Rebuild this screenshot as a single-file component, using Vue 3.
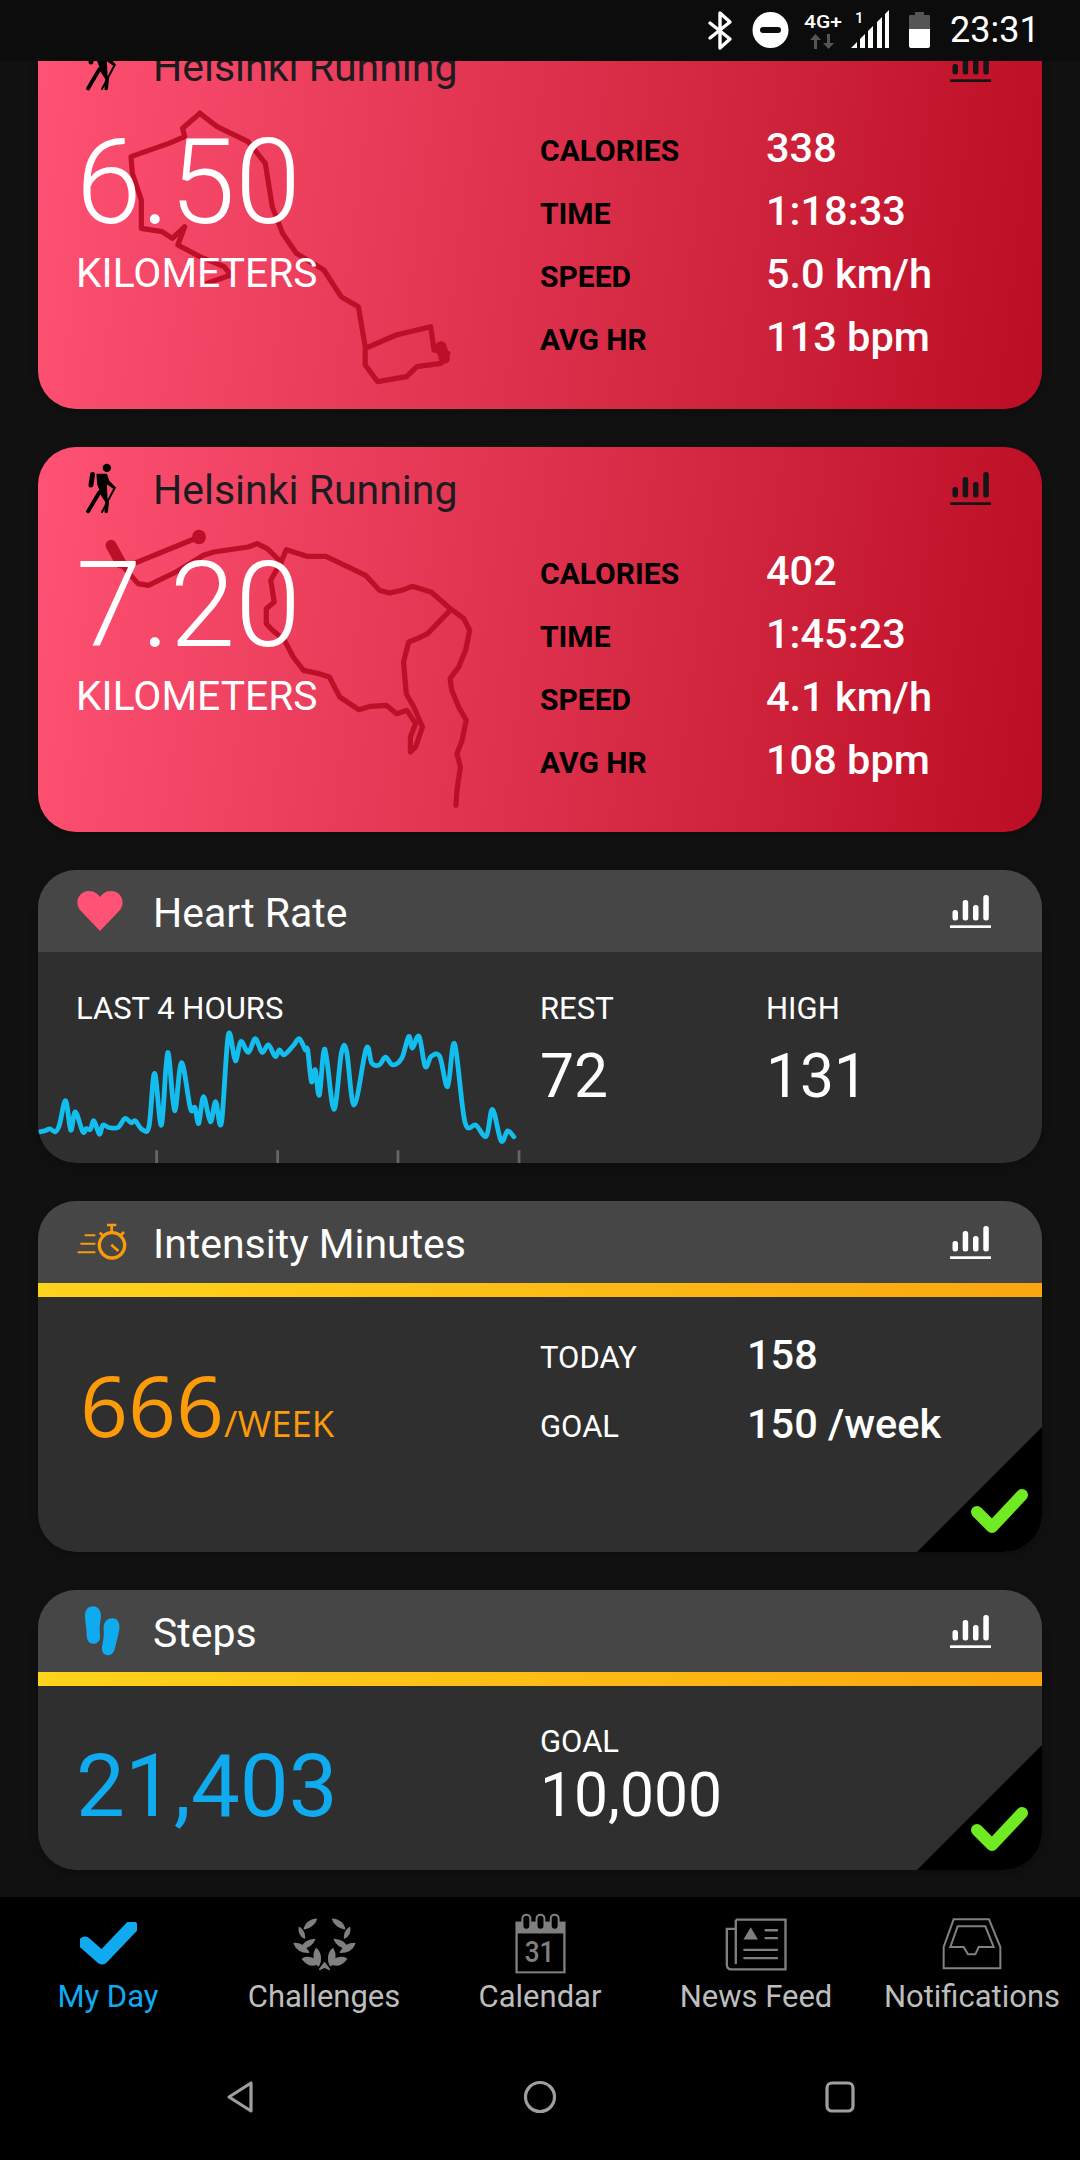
<script setup>
// heart rate trace, read off the reference
const hrPoints = [
  [115,815],[130,812],[145,806],[160,815],[172,795],[190,722],[205,810],[218,755],[240,815],[250,805],
  [262,808],[272,782],[288,822],[298,795],[315,802],[342,802],[362,775],[380,788],[392,782],[412,808],
  [432,798],[448,640],[468,795],[486,578],[506,752],[526,608],[552,745],[565,742],[576,790],[590,710],
  [610,785],[625,725],[642,788],[662,525],[682,603],[698,545],[720,578],[740,537],[760,578],[778,555],
  [798,590],[810,570],[824,585],[850,558],[868,537],[885,570],[892,570],[903,665],[914,630],[926,705],
  [942,568],[968,748],[990,578],[1005,575],[1027,735],[1062,566],[1078,610],[1100,615],[1118,592],[1138,615],
  [1165,595],[1185,530],[1196,565],[1215,530],[1233,620],[1250,590],[1275,590],[1298,680],[1318,552],[1348,785],
  [1380,795],[1410,828],[1428,748],[1453,842],[1472,812],[1490,830]
]

function smooth(pts) {
  let d = `M${pts[0][0]} ${pts[0][1]}`
  for (let i = 0; i < pts.length - 1; i++) {
    const p0 = pts[i - 1] || pts[i]
    const p1 = pts[i]
    const p2 = pts[i + 1]
    const p3 = pts[i + 2] || p2
    const c1x = p1[0] + (p2[0] - p0[0]) / 6
    const c1y = p1[1] + (p2[1] - p0[1]) / 6
    const c2x = p2[0] - (p3[0] - p1[0]) / 6
    const c2y = p2[1] - (p3[1] - p1[1]) / 6
    d += ` C${c1x} ${c1y} ${c2x} ${c2y} ${p2[0]} ${p2[1]}`
  }
  return d
}

const hrPath = smooth(hrPoints)
const ticks = [454, 805, 1154, 1505]

const activities = [
  {
    km: '6.50',
    viewBox: '55 72 871 1155',
    route: [
      'M290 340 L265 385 L268 410 L245 430 L190 470 L192 520 L205 600 L205 685 L235 695 L250 715 L268 680 L258 735 L290 770 L325 800 L335 825 L300 850',
      'M290 340 L315 380 L360 425 L385 490 L395 620 L410 700 L430 760 L470 810 L495 890 L520 920 L530 1040 L530 1095 L548 1145 L590 1130 L605 1100 L640 1090 L650 1060 L630 1050 L625 980 L575 1005 L530 1045'
    ],
    thick: 'M640 1040 L645 1075',
    dots: [],
    rows: [
      ['CALORIES', '338'],
      ['TIME', '1:18:33'],
      ['SPEED', '5.0 km/h'],
      ['AVG HR', '113 bpm']
    ]
  },
  {
    km: '7.20',
    viewBox: '110 50 1740 1155',
    route: [
      'M577 320 L375 405',
      'M350 400 L400 460 L430 465 L510 425 L590 375 L620 365 L720 350 L745 340 L775 355 L815 395 L830 358 L890 378 L945 378 L1000 405 L1060 435 L1100 480 L1130 488 L1165 480 L1195 468 L1250 485 L1300 530 L1345 565 L1362 600 L1350 660 L1330 710 L1305 745 L1310 780 L1330 830 L1352 870 L1340 930 L1325 970 L1335 1010 L1325 1080 L1322 1125',
      'M1305 540 L1240 610 L1210 625 L1185 635 L1170 695 L1178 790 L1200 830 L1225 890 L1205 950 L1190 965 L1190 920 L1205 880 L1180 840 L1150 850 L1120 825 L1075 828 L1040 838 L985 800 L955 740 L925 730 L880 720 L850 680 L825 630 L790 600 L772 580 L772 535 L795 515 L785 450 L815 395'
    ],
    thick: 'M322 345 L350 398',
    dots: [[577, 320, 20, 22]],
    rows: [
      ['CALORIES', '402'],
      ['TIME', '1:45:23'],
      ['SPEED', '4.1 km/h'],
      ['AVG HR', '108 bpm']
    ]
  }
]

const navItems = [
  { label: 'My Day', icon: 'check', active: true },
  { label: 'Challenges', icon: 'laurel' },
  { label: 'Calendar', icon: 'calendar' },
  { label: 'News Feed', icon: 'news' },
  { label: 'Notifications', icon: 'inbox' }
]
</script>

<template>
  <div class="page">
    <header class="status">
      <svg class="status-icons" viewBox="700 0 240 61" width="240" height="61">
        <path d="M710 23 L730 39 L720 48 V13 L730 22 L710 38" fill="none" stroke="#fff" stroke-width="3.4" stroke-linejoin="round" stroke-linecap="round" />
        <circle cx="770.5" cy="30" r="18" fill="#fff" />
        <rect x="760" y="27" width="21" height="6" rx="3" fill="#0c0c0c" />
        <text x="804" y="28" class="net" textLength="38" lengthAdjust="spacingAndGlyphs">4G+</text>
        <path d="M815 50 V41 H811 L816.500 35 L822 41 H818 V50Z M831 35 V44 H835 L829.500 50 L824 44 H828 V35Z" fill="#555" transform="translate(-1 -1)" />
        <text x="855" y="23" class="net-one">1</text>
        <path d="M851 48 L857 42 V48Z M860 48 V39 L865 34 V48Z M868 48 V31 L873 26 V48Z M877 48 V22 L882 17 V48Z M885 48 V14 L889 10 V48Z" fill="#fff" />
        <path d="M909 16 Q909 15 910 15 H915 V12 H924 V15 H929 Q930 15 930 16 V29 H909Z" fill="#555" />
        <path d="M909 29 H930 V46 Q930 48 928 48 H911 Q909 48 909 46Z" fill="#fff" />
      </svg>
      <span class="clock">23:31</span>
    </header>

    <main class="feed">
      <section v-for="a in activities" :key="a.km" class="card card-red">
        <svg class="route" :viewBox="a.viewBox" preserveAspectRatio="none">
          <path v-for="(d, i) in a.route" :key="i" :d="d" class="route-line" />
          <path :d="a.thick" class="route-line route-thick" />
          <ellipse v-for="(p, i) in a.dots" :key="'d' + i" :cx="p[0]" :cy="p[1]" :rx="p[2]" :ry="p[3]" fill="#bd0f28" />
        </svg>
        <div class="card-head">
          <svg class="head-icon" viewBox="245 95 100 160" width="34" height="52">
            <circle cx="310" cy="110" r="13" fill="#000" />
            <path d="M266 130 L261 163" stroke="#000" stroke-width="15" stroke-linecap="round" />
            <path d="M278 128 H310 L318 150 L338 170 L332 176 L310 160 L312 205 L292 190 L280 160Z" fill="#000" />
            <path d="M287 185 L252 244" stroke="#000" stroke-width="12" stroke-linecap="round" />
            <path d="M292 185 L311 214 L308 244" stroke="#000" stroke-width="11" stroke-linecap="round" fill="none" />
            <path d="M334 172 L295 246" stroke="#000" stroke-width="6" stroke-linecap="round" />
          </svg>
          <h2 class="title title-dark">Helsinki Running</h2>
          <svg class="bars" viewBox="0 0 41 33" width="41" height="33" fill="#151515">
            <rect x="2.500" y="15" width="5.500" height="10.500" rx="2.500" />
            <rect x="12.700" y="5" width="5.500" height="20.500" rx="2.500" />
            <rect x="23" y="10" width="5.500" height="15.500" rx="2.500" />
            <rect x="33.300" y="0" width="5.500" height="25.500" rx="2.500" />
            <rect x="0" y="30.300" width="41" height="2.700" />
          </svg>
        </div>
        <div class="red-body">
          <div class="distance">
            <div class="km">{{ a.km }}</div>
            <div class="km-unit">KILOMETERS</div>
          </div>
          <dl class="stats">
            <template v-for="r in a.rows" :key="r[0]">
              <dt>{{ r[0] }}</dt>
              <dd>{{ r[1] }}</dd>
            </template>
          </dl>
        </div>
      </section>

      <section class="card card-hr">
        <div class="card-head head-grey">
          <svg class="head-icon" viewBox="-1 -1 48 42" width="48" height="42">
            <path d="M23 40 L3 19 C-3 11 2 0 12 0 C17 0 21 3 23 6 C25 3 29 0 34 0 C44 0 49 11 43 19Z" fill="#ff5274" />
          </svg>
          <h2 class="title">Heart Rate</h2>
          <svg class="bars" viewBox="0 0 41 33" width="41" height="33" fill="#fff">
            <rect x="2.500" y="15" width="5.500" height="10.500" rx="2.500" />
            <rect x="12.700" y="5" width="5.500" height="20.500" rx="2.500" />
            <rect x="23" y="10" width="5.500" height="15.500" rx="2.500" />
            <rect x="33.300" y="0" width="5.500" height="25.500" rx="2.500" />
            <rect x="0" y="30.300" width="41" height="2.700" />
          </svg>
        </div>
        <div class="hr-body">
          <div class="hr-chart">
            <div class="small-label chart-label">LAST 4 HOURS</div>
            <svg class="chart" viewBox="110 505 1450 403" preserveAspectRatio="none">
              <path :d="hrPath" fill="none" stroke="#13bdee" stroke-width="14" stroke-linejoin="round" stroke-linecap="round" />
              <rect v-for="t in ticks" :key="t" :x="t - 4" y="870" width="8" height="38" fill="#666" />
            </svg>
          </div>
          <div class="hr-col">
            <div class="small-label">REST</div>
            <div class="mid-value">72</div>
          </div>
          <div class="hr-col">
            <div class="small-label">HIGH</div>
            <div class="mid-value">131</div>
          </div>
        </div>
      </section>

      <section class="card card-intensity">
        <div class="card-head head-grey">
          <svg class="head-icon" viewBox="220 98 150 114" width="52" height="38" fill="none" stroke="#fb9a0a">
            <circle cx="325" cy="165" r="38" stroke-width="10" />
            <path d="M310 104 H338 M324 105 V125" stroke-width="8" />
            <path d="M288 127 L297 135 M361 125 L352 134" stroke-width="8" />
            <path d="M323 163 L344 182" stroke-width="8" />
            <path d="M243 135 H275 M230 160 H275 M222 186 H275" stroke-width="6" />
          </svg>
          <h2 class="title">Intensity Minutes</h2>
          <svg class="bars" viewBox="0 0 41 33" width="41" height="33" fill="#fff">
            <rect x="2.500" y="15" width="5.500" height="10.500" rx="2.500" />
            <rect x="12.700" y="5" width="5.500" height="20.500" rx="2.500" />
            <rect x="23" y="10" width="5.500" height="15.500" rx="2.500" />
            <rect x="33.300" y="0" width="5.500" height="25.500" rx="2.500" />
            <rect x="0" y="30.300" width="41" height="2.700" />
          </svg>
        </div>
        <div class="gold"></div>
        <div class="intensity-body">
          <div class="week"><span class="week-num">666</span><span class="week-unit">/WEEK</span></div>
          <dl class="goal-list">
            <dt>TODAY</dt>
            <dd>158</dd>
            <dt>GOAL</dt>
            <dd>150 /week</dd>
          </dl>
        </div>
        <svg class="done" viewBox="0 0 125 125" width="125" height="125">
          <path d="M0 125 L125 0 V125Z" fill="#000" />
          <path d="M60 85 L75 100 L105 68" fill="none" stroke="#70ea22" stroke-width="12" stroke-linecap="round" stroke-linejoin="round" />
        </svg>
      </section>

      <section class="card card-steps">
        <div class="card-head head-grey">
          <svg class="head-icon feet" viewBox="240 42 115 160" width="37" height="52" fill="#10aaee">
            <path d="M268 45 C285 45 296 62 292 85 C288 105 288 120 290 140 C290 155 280 162 268 162 C255 162 248 150 248 130 C248 110 243 90 243 75 C243 58 252 45 268 45Z" />
            <path d="M328 82 C345 82 352 97 350 115 C348 135 340 155 335 180 C332 192 322 198 312 197 C300 195 294 185 296 170 C300 150 303 135 301 115 C300 95 310 82 328 82Z" />
          </svg>
          <h2 class="title">Steps</h2>
          <svg class="bars" viewBox="0 0 41 33" width="41" height="33" fill="#fff">
            <rect x="2.500" y="15" width="5.500" height="10.500" rx="2.500" />
            <rect x="12.700" y="5" width="5.500" height="20.500" rx="2.500" />
            <rect x="23" y="10" width="5.500" height="15.500" rx="2.500" />
            <rect x="33.300" y="0" width="5.500" height="25.500" rx="2.500" />
            <rect x="0" y="30.300" width="41" height="2.700" />
          </svg>
        </div>
        <div class="gold"></div>
        <div class="steps-body">
          <div class="steps-num">21,403</div>
          <div class="steps-goal">
            <div class="small-label">GOAL</div>
            <div class="mid-value">10,000</div>
          </div>
        </div>
        <svg class="done" viewBox="0 0 125 125" width="125" height="125">
          <path d="M0 125 L125 0 V125Z" fill="#000" />
          <path d="M60 85 L75 100 L105 68" fill="none" stroke="#70ea22" stroke-width="12" stroke-linecap="round" stroke-linejoin="round" />
        </svg>
      </section>
    </main>

    <nav class="tabs">
      <div v-for="n in navItems" :key="n.label" class="tab" :class="{ active: n.active }">
        <div class="tab-icon">
          <svg v-if="n.icon === 'check'" viewBox="0 0 57 45" width="57" height="45">
            <path d="M5 21 L22 36 L51.500 5" fill="none" stroke="#10aaf0" stroke-width="13" stroke-linejoin="round" stroke-linecap="round" />
          </svg>
          <svg v-else-if="n.icon === 'laurel'" viewBox="60 30 200 170" width="67" height="57" fill="#808080" stroke="#808080" stroke-width="5" stroke-linejoin="round">
            <g>
              <path d="M135 40 C120 42 105 52 100 68 C115 66 130 55 135 40Z" />
              <path d="M85 65 C92 70 100 80 100 95 C90 90 84 78 85 65Z" />
              <path d="M130 100 C112 102 98 110 92 125 C110 124 124 115 130 100Z" />
              <path d="M70 112 C85 112 102 120 112 138 C92 138 76 128 70 112Z" />
              <path d="M135 128 C150 140 150 165 142 178 C128 165 125 145 135 128Z" />
              <path d="M95 158 C110 150 130 155 142 172 C125 180 108 175 95 158Z" />
            </g>
            <g transform="translate(320 0) scale(-1 1)">
              <path d="M135 40 C120 42 105 52 100 68 C115 66 130 55 135 40Z" />
              <path d="M85 65 C92 70 100 80 100 95 C90 90 84 78 85 65Z" />
              <path d="M130 100 C112 102 98 110 92 125 C110 124 124 115 130 100Z" />
              <path d="M70 112 C85 112 102 120 112 138 C92 138 76 128 70 112Z" />
              <path d="M135 128 C150 140 150 165 142 178 C128 165 125 145 135 128Z" />
              <path d="M95 158 C110 150 130 155 142 172 C125 180 108 175 95 158Z" />
            </g>
            <path d="M160 170 L174 189 L160 182 L146 189Z" />
          </svg>
          <svg v-else-if="n.icon === 'calendar'" viewBox="730 22 160 188" width="53" height="62">
            <rect x="734" y="48" width="152" height="157" fill="#808080" />
            <rect x="741" y="84" width="138" height="115" fill="#000" />
            <rect v-for="x in [755, 798, 841]" :key="x" :x="x" y="27" width="24" height="46" rx="12" fill="#000" stroke="#808080" stroke-width="6" />
            <text x="762" y="172" class="cal-num" textLength="90" lengthAdjust="spacingAndGlyphs">31</text>
          </svg>
          <svg v-else-if="n.icon === 'news'" viewBox="70 34 192 166" width="64" height="55">
            <path d="M105 42 H255 V192 H92 Q78 192 78 178 V70 H104 M105 42 V176" fill="none" stroke="#808080" stroke-width="7" />
            <path d="M150 65 L172 102 H128Z" fill="#808080" />
            <path d="M192 74 H232 M192 98 H232 M128 133 H232 M128 158 H232" stroke="#808080" stroke-width="7" />
          </svg>
          <svg v-else viewBox="722 38 186 162" width="62" height="54" fill="none" stroke="#808080" stroke-width="6">
            <path d="M760 45 H866 L900 128 V192 H730 V128Z" />
            <path d="M772 66 H855 L880 128 H835 L825 150 H803 L790 128 H750Z" />
          </svg>
        </div>
        <div class="tab-label">{{ n.label }}</div>
      </div>
    </nav>

    <div class="softkeys">
      <svg viewBox="0 0 30 34" width="30" height="34" fill="none" stroke="#9e9e9e" stroke-width="3.200" stroke-linejoin="round">
        <path d="M26 3 V31 L4 17Z" />
      </svg>
      <svg viewBox="0 0 34 34" width="34" height="34" fill="none" stroke="#9e9e9e" stroke-width="3.200">
        <circle cx="17" cy="17" r="14.500" />
      </svg>
      <svg viewBox="0 0 30 32" width="30" height="32" fill="none" stroke="#9e9e9e" stroke-width="3.200">
        <rect x="2" y="2" width="26" height="28" rx="5" />
      </svg>
    </div>
  </div>
</template>

<style>
html, body {
  margin: 0;
  background: #111;
}
</style>

<style scoped>
* {
  box-sizing: border-box;
}

.page {
  width: 1080px;
  height: 2160px;
  display: flex;
  flex-direction: column;
  overflow: hidden;
  background: #111;
  font-family: Roboto, "Liberation Sans", sans-serif;
  color: #fff;
}

/* status bar */
.status {
  position: relative;
  z-index: 2;
  flex: none;
  height: 61px;
  background: #0c0c0c;
  display: flex;
  justify-content: flex-end;
  align-items: center;
  padding-right: 47px;
}
.status-icons {
  margin-right: 10px;
}
.net {
  font: 500 19px Roboto, sans-serif;
  fill: #fff;
}
.net-one {
  font: 500 15px Roboto, sans-serif;
  fill: #fff;
}
.clock {
  font-size: 36px;
  line-height: 61px;
  width: 83px;
}

/* cards */
.feed {
  flex: none;
  height: 1836px;
  overflow: hidden;
  padding: 0 38px;
  display: flex;
  flex-direction: column;
  gap: 38px;
}
.card {
  position: relative;
  flex: none;
  border-radius: 38px;
  overflow: hidden;
  background: #2f2f2f;
  box-shadow: 0 4px 10px rgba(0, 0, 0, .25);
}
.card-red {
  height: 385px;
  background: linear-gradient(97deg, #ff5274 0%, #bb0e24 100%);
}
.card-red:first-child {
  margin-top: -37px;
}
.card-hr {
  height: 293px;
}
.card-intensity {
  height: 351px;
}
.card-steps {
  height: 280px;
}
.route {
  position: absolute;
  left: 0;
  top: 0;
  width: 600px;
  height: 385px;
}
.route-line {
  fill: none;
  stroke: #bd0f28;
  stroke-width: 5.200px;
  stroke-linejoin: round;
  stroke-linecap: round;
  vector-effect: non-scaling-stroke;
}
.route-thick {
  stroke-width: 11px;
}
.card-head {
  position: relative;
  height: 82px;
  display: flex;
  align-items: center;
  padding-left: 38px;
  padding-right: 51px;
}
.head-grey {
  background: #464646;
}
.head-icon {
  flex: none;
  margin-right: auto;
}
.feet {
  margin-left: 8px;
}
.title {
  position: absolute;
  left: 115px;
  top: 0;
  margin: 0;
  font-size: 41px;
  font-weight: 400;
  line-height: 87px;
  white-space: nowrap;
}
.title-dark {
  color: #1c1c20;
}
.bars {
  flex: none;
}

/* red activity cards */
.card-red .head-icon {
  margin-left: 9px;
  margin-top: 2px;
}
.red-body {
  position: relative;
  display: flex;
}
.distance {
  width: 502px;
  padding-left: 38px;
}
.km {
  margin-top: 18px;
  font-size: 118px;
  font-weight: 300;
  line-height: 118px;
}
.km-unit {
  margin-top: 7px;
  font-size: 40.800px;
  line-height: 48px;
}
.stats {
  margin: 0;
  padding-top: 12px;
  display: grid;
  grid-template-columns: 226px auto;
  grid-auto-rows: 63px;
}
.stats dt {
  padding-top: 3px;
  font-size: 30px;
  font-weight: 700;
  line-height: 59px;
  color: #000;
}
.stats dd {
  margin: 0;
  font-size: 41.500px;
  font-weight: 500;
  line-height: 59px;
}

/* heart rate */
.hr-body {
  display: flex;
}
.small-label {
  font-size: 31px;
  line-height: 36px;
}
.chart-label {
  padding-left: 38px;
  padding-top: 39px;
}
.hr-chart {
  width: 502px;
}
.chart {
  display: block;
  margin-top: 1px;
  width: 500px;
  height: 135px;
}
.hr-col {
  width: 226px;
  padding-top: 39px;
}
.mid-value {
  font-size: 60.500px;
  line-height: 60px;
  margin-top: 20px;
}

/* gold band */
.gold {
  height: 14px;
  background: linear-gradient(90deg, #ffd41c, #fba60f);
}

/* intensity minutes */
.intensity-body {
  display: flex;
}
.week {
  width: 502px;
  padding-left: 38px;
  padding-top: 58px;
  font-family: "Open Sans", sans-serif;
  color: #fb9a0a;
  line-height: 100px;
  white-space: nowrap;
}
.week-num {
  font-size: 84px;
  margin-left: 4px;
}
.week-unit {
  font-size: 36.500px;
}
.goal-list {
  margin: 0;
  padding-top: 25px;
  display: grid;
  grid-template-columns: 207px auto;
  grid-auto-rows: 69px;
}
.goal-list dt {
  padding-top: 3px;
  font-size: 31px;
  line-height: 66px;
}
.goal-list dd {
  margin: 0;
  font-size: 41.500px;
  font-weight: 500;
  line-height: 66px;
}
.done {
  position: absolute;
  right: 0;
  bottom: 0;
}

/* steps */
.steps-body {
  display: flex;
}
.steps-num {
  width: 502px;
  padding-left: 38px;
  padding-top: 50px;
  font-size: 87px;
  line-height: 100px;
  color: #10aaee;
}
.steps-goal {
  padding-top: 38px;
}
.steps-goal .mid-value {
  margin-top: 6px;
}

/* bottom nav */
.tabs {
  flex: none;
  height: 146px;
  background: #000;
  display: grid;
  grid-template-columns: repeat(5, 1fr);
  padding-top: 14px;
}
.tab {
  display: flex;
  flex-direction: column;
  align-items: center;
}
.tab-icon {
  height: 66px;
  display: flex;
  align-items: center;
  justify-content: center;
}
.tab-label {
  margin-top: 2px;
  font-size: 31px;
  line-height: 36px;
  color: #bdbdbd;
  white-space: nowrap;
}
.tab.active .tab-label {
  color: #10aaf0;
}
.cal-num {
  font: 500 88px Roboto, sans-serif;
  fill: #808080;
}

/* android soft keys */
.softkeys {
  flex: 1;
  background: #000;
  display: grid;
  grid-template-columns: repeat(3, 1fr);
  padding: 0 90px 10px;
  justify-items: center;
  align-items: center;
}
</style>
